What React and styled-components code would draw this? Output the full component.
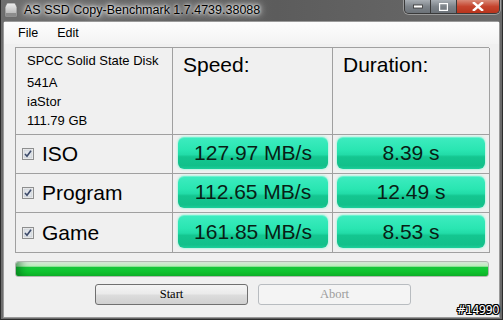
import React from "react";
import styled, { createGlobalStyle } from "styled-components";

const Global = createGlobalStyle`
  html, body { margin: 0; padding: 0; background: #fff; }
  #root { width: 503px; height: 320px; overflow: hidden; }
`;

const Window = styled.div`
  width: 503px;
  height: 320px;
  box-sizing: border-box;
  display: flex;
  flex-direction: column;
  background: linear-gradient(to right, #6e6e6e, #5c5c5c 55%, #6a6a6a);
  border-left: 1px solid #2c2c2c;
  border-right: 1px solid #2c2c2c;
  border-bottom: 1px solid #2c2c2c;
  font-family: "Liberation Sans", Arial, sans-serif;
`;

const TitleBar = styled.div`
  height: 21px;
  display: flex;
  align-items: flex-start;
  position: relative;
`;

const AppIcon = styled.div`
  width: 14px;
  height: 16px;
  margin: 2px 0 0 3px;
`;

const Title = styled.div`
  margin: 2px 0 0 6px;
  font-size: 12.5px;
  line-height: 16px;
  color: #000;
  text-shadow: 0 0 6px #fff, 0 0 10px rgba(255,255,255,0.9), 0 0 3px #fff;
  white-space: nowrap;
`;

const Caption = styled.div`
  position: absolute;
  right: 2px;
  top: 0;
  display: flex;
  height: 13px;
  border: 1px solid #3a3a3a;
  border-top: none;
  border-radius: 0 0 5px 5px;
  overflow: hidden;
  box-shadow: 0 0 0 1px rgba(255,255,255,0.35);
`;

const CapBtn = styled.div`
  width: ${(p) => p.$w}px;
  height: 100%;
  display: flex;
  align-items: center;
  justify-content: center;
  background: ${(p) =>
    p.$close
      ? "linear-gradient(to bottom, #d88a78, #c5442e 50%, #b8341c)"
      : "linear-gradient(to bottom, #a8aeb4, #7e848a 50%, #6c7278)"};
  border-right: ${(p) => (p.$close ? "none" : "1px solid #3a3a3a")};
`;

const Client = styled.div`
  flex: 1;
  margin: 0 2px 1px 2px;
  background: #f0f0f0;
  border: 1px solid #9a9a9a;
  border-radius: 3px 3px 0 0;
  display: flex;
  flex-direction: column;
  position: relative;
`;

const MenuBar = styled.div`
  height: 22px;
  display: flex;
  align-items: center;
  gap: 19px;
  padding-left: 14px;
  background: linear-gradient(to bottom, #fdfdfd, #f3f3f3);
  font-size: 12.5px;
  color: #000;
`;

const Grid = styled.div`
  margin: 3px 0 0 11px;
  width: 474px;
  display: grid;
  grid-template-columns: 157px 160px 157px;
  grid-template-rows: 87px 39px 39px 40px;
  border-top: 1px solid #a0a0a0;
  border-left: 1px solid #a0a0a0;
  box-sizing: border-box;
`;

const Cell = styled.div`
  border-right: 1px solid #a0a0a0;
  border-bottom: 1px solid #a0a0a0;
  box-sizing: border-box;
  display: flex;
  flex-direction: column;
  padding: ${(p) => p.$pad || "0"};
`;

const InfoLine = styled.div`
  font-size: 13px;
  line-height: 19px;
  color: #000;
  margin-bottom: ${(p) => (p.$gap ? "3px" : "0")};
`;

const Heading = styled.div`
  font-size: 21px;
  line-height: 24px;
  color: #000;
`;

const LabelCell = styled(Cell)`
  flex-direction: row;
  align-items: center;
  padding-left: 6px;
  gap: 8px;
`;

const Label = styled.span`
  font-size: 21px;
  color: #000;
  line-height: 22px;
`;

const ValueCell = styled(Cell)`
  padding: 2px ${(p) => p.$r}px 4px ${(p) => p.$l}px;
`;

const Value = styled.div`
  flex: 1;
  border-radius: 6px;
  display: flex;
  align-items: center;
  justify-content: center;
  font-size: 21px;
  color: #081e16;
  background: linear-gradient(
    to bottom,
    #3eecc0 0%,
    #2ae6b2 40%,
    #22dca8 55%,
    #14c690 62%,
    #12c08a 90%,
    #1ccf9a 100%
  );
  box-shadow: 0 0 2px 1px #b8f4e2, inset 0 1px 0 rgba(255,255,255,0.25);
`;

const Progress = styled.div`
  margin: 8px 0 0 11px;
  width: 474px;
  height: 16px;
  box-sizing: border-box;
  border: 1px solid #b0b8b0;
  border-radius: 3px;
  background: linear-gradient(
    to bottom,
    #eef8ee 0%,
    #bcefbc 30%,
    #16c83a 38%,
    #10c630 70%,
    #0fb82a 100%
  );
  box-shadow: inset 8px 0 10px -4px rgba(0, 90, 20, 0.6);
`;

const ButtonRow = styled.div`
  display: flex;
  gap: 10px;
  margin: 7px 0 0 91px;
`;

const Button = styled.div`
  width: 153px;
  height: 21px;
  box-sizing: border-box;
  border-radius: 3px;
  display: flex;
  align-items: center;
  justify-content: center;
  font-family: "Liberation Serif", "Times New Roman", serif;
  font-size: 12.5px;
  color: ${(p) => (p.$disabled ? "#9c9c9c" : "#000")};
  border: 1px solid ${(p) => (p.$disabled ? "#b8bcc0" : "#707070")};
  background: ${(p) =>
    p.$disabled
      ? "#f4f4f4"
      : "linear-gradient(to bottom, #f4f4f4 0%, #ebebeb 45%, #dcdcdc 55%, #d0d0d0 100%)"};
`;

const Watermark = styled.div`
  position: absolute;
  right: 0px;
  bottom: 0px;
  font-family: "DejaVu Sans", sans-serif;
  font-size: 11.5px;
  letter-spacing: -0.6px;
  color: #fff;
  text-shadow: -1px 0 #000, 1px 0 #000, 0 -1px #000, 0 1px #000,
    -1px -1px #000, 1px 1px #000, -1px 1px #000, 1px -1px #000;
`;

const CheckBox = () => (
  <svg width="12" height="12" viewBox="0 0 12 12">
    <rect x="0.5" y="0.5" width="11" height="11" fill="#f4f4f4" stroke="#8e8f8f" />
    <rect x="2" y="2" width="8" height="8" fill="#dfe3e8" stroke="#c2c8ce" strokeWidth="0.6" />
    <path d="M3 6 L5 8.3 L9 2.8" fill="none" stroke="#3c4a6a" strokeWidth="1.6" />
  </svg>
);

const rows = [
  { name: "ISO", speed: "127.97 MB/s", dur: "8.39 s" },
  { name: "Program", speed: "112.65 MB/s", dur: "12.49 s" },
  { name: "Game", speed: "161.85 MB/s", dur: "8.53 s" },
];

export default function App() {
  return (
    <>
      <Global />
      <Window>
        <TitleBar>
          <AppIcon>
            <svg width="14" height="16" viewBox="0 0 14 16">
              <defs>
                <linearGradient id="ig" x1="0" y1="0" x2="0" y2="1">
                  <stop offset="0" stopColor="#f0f0f0" />
                  <stop offset="1" stopColor="#a8a8a8" />
                </linearGradient>
              </defs>
              <path d="M3 1 H11 L13 5 V15 H1 V5 Z" fill="url(#ig)" stroke="#6a6a6a" strokeWidth="0.8" />
              <rect x="2" y="11" width="10" height="3" fill="#8c8c8c" />
            </svg>
          </AppIcon>
          <Title>AS SSD Copy-Benchmark 1.7.4739.38088</Title>
          <Caption>
            <CapBtn $w={25}>
              <svg width="10" height="5" viewBox="0 0 10 5">
                <rect x="0.5" y="1" width="9" height="3" fill="#fff" stroke="#333" strokeWidth="0.8" />
              </svg>
            </CapBtn>
            <CapBtn $w={25}>
              <svg width="9" height="8" viewBox="0 0 9 8">
                <rect x="0.5" y="0.5" width="8" height="7" fill="none" stroke="#fff" strokeWidth="1.4" />
              </svg>
            </CapBtn>
            <CapBtn $w={42} $close>
              <svg width="12" height="9" viewBox="0 0 12 9">
                <path d="M1 0 L11 9 M11 0 L1 9" stroke="#fff" strokeWidth="2.4" />
              </svg>
            </CapBtn>
          </Caption>
        </TitleBar>
        <Client>
          <MenuBar>
            <span>File</span>
            <span>Edit</span>
          </MenuBar>
          <Grid>
            <Cell $pad="3px 0 0 11px">
              <InfoLine $gap>SPCC Solid State Disk</InfoLine>
              <InfoLine>541A</InfoLine>
              <InfoLine>iaStor</InfoLine>
              <InfoLine>111.79 GB</InfoLine>
            </Cell>
            <Cell $pad="5px 0 0 10px">
              <Heading>Speed:</Heading>
            </Cell>
            <Cell $pad="5px 0 0 10px">
              <Heading>Duration:</Heading>
            </Cell>
            {rows.map((r) => (
              <React.Fragment key={r.name}>
                <LabelCell>
                  <CheckBox />
                  <Label>{r.name}</Label>
                </LabelCell>
                <ValueCell $l={5} $r={4}>
                  <Value>{r.speed}</Value>
                </ValueCell>
                <ValueCell $l={4} $r={4}>
                  <Value>{r.dur}</Value>
                </ValueCell>
              </React.Fragment>
            ))}
          </Grid>
          <Progress />
          <ButtonRow>
            <Button>Start</Button>
            <Button $disabled>Abort</Button>
          </ButtonRow>
          <Watermark>#14990</Watermark>
        </Client>
      </Window>
    </>
  );
}
